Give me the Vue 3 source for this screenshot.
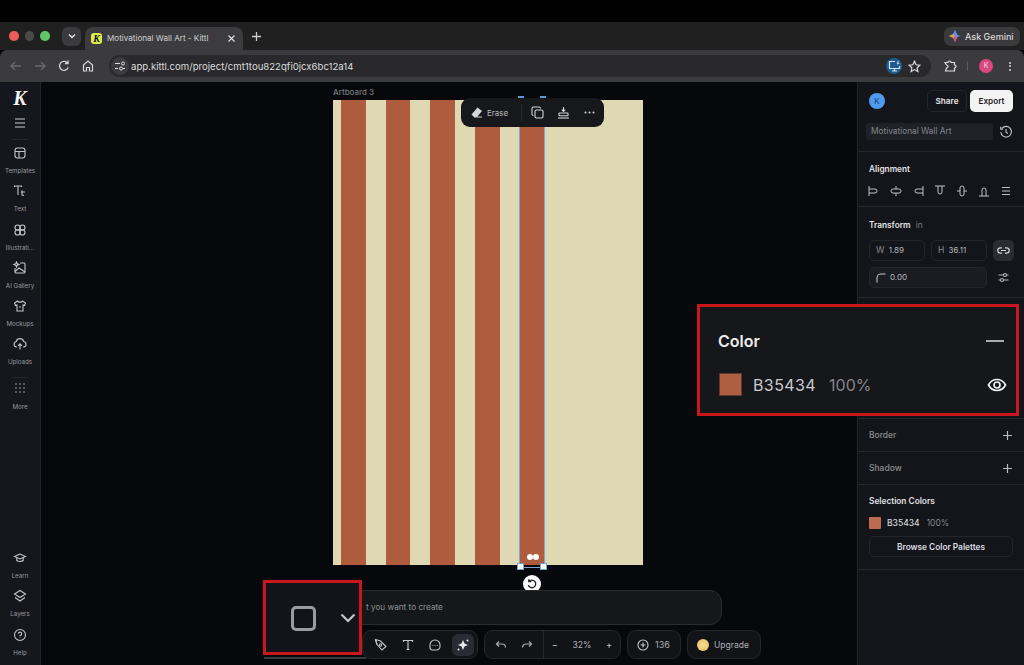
<script setup>
const navTop = [
  { label: 'Templates', icon: 'templates' },
  { label: 'Text', icon: 'text' },
  { label: 'Illustrati...', icon: 'illus' },
  { label: 'AI Gallery', icon: 'gallery' },
  { label: 'Mockups', icon: 'mockups' },
  { label: 'Uploads', icon: 'uploads' }
]
const navBottom = [
  { label: 'Learn', icon: 'learn' },
  { label: 'Layers', icon: 'layers' },
  { label: 'Help', icon: 'help' }
]
const stripes = [1, 2, 3, 4, 5]
const alignIcons = [
  'M2 2v10M2 5h6a2 2 0 0 1 0 4H2',
  'M7 2v3M7 9v3M4 5h6a2 2 0 0 1 0 4H4a2 2 0 0 1 0-4',
  'M12 2v10M12 5H6a2 2 0 0 0 0 4h6',
  'M2 2h10M5 2v6a2 2 0 0 0 4 0V2',
  'M2 7h3M9 7h3M5 4a2 2 0 0 1 4 0v6a2 2 0 0 1-4 0z',
  'M2 12h10M5 12V6a2 2 0 0 1 4 0v6'
]
</script>

<template>
  <div class="page">
    <div class="mac-top"></div>

    <div class="tabstrip">
      <div class="lights">
        <span class="light red"></span>
        <span class="light grey"></span>
        <span class="light green"></span>
      </div>
      <div class="tab-search">
        <svg width="10" height="10" viewBox="0 0 10 10"><path d="M2 3.500 5 6.500 8 3.500" fill="none" stroke="#ddd" stroke-width="1.500" /></svg>
      </div>
      <div class="tab">
        <span class="favicon">K</span>
        <span class="tab-title">Motivational Wall Art - Kittl</span>
        <svg width="9" height="9" viewBox="0 0 9 9"><path d="M1.500 1.500l6 6M7.500 1.500l-6 6" stroke="#ddd" stroke-width="1.200" /></svg>
      </div>
      <svg class="newtab" width="11" height="11" viewBox="0 0 11 11"><path d="M5.500 1v9M1 5.500h9" stroke="#ccc" stroke-width="1.300" /></svg>
      <div class="gemini">
        <svg width="12" height="12" viewBox="0 0 12 12"><path d="M6 0C6.400 3.500 8.500 5.600 12 6 8.500 6.400 6.400 8.500 6 12 5.600 8.500 3.500 6.400 0 6 3.500 5.600 5.600 3.500 6 0z" fill="#6f8fe8" /><path d="M6 0 8 4 6 6 4 4z" fill="#5b8def" /><path d="M0 6 4 4 6 6 4 8z" fill="#d8a24a" /><path d="M6 12 4 8 6 6 8 8z" fill="#d8588c" /></svg>
        <span>Ask Gemini</span>
      </div>
    </div>

    <div class="toolbar">
      <svg class="tb-icon" width="14" height="14" viewBox="0 0 14 14"><path d="M12 7H2M6 3 2 7l4 4" fill="none" stroke="#6a6a6a" stroke-width="1.300" /></svg>
      <svg class="tb-icon" width="14" height="14" viewBox="0 0 14 14"><path d="M2 7h10M8 3l4 4-4 4" fill="none" stroke="#6a6a6a" stroke-width="1.300" /></svg>
      <svg class="tb-icon" width="14" height="14" viewBox="0 0 14 14"><path d="M11.200 8.500A4.500 4.500 0 1 1 10.500 4M11 1.500V4.500H8" fill="none" stroke="#d5d5d5" stroke-width="1.300" /></svg>
      <svg class="tb-icon" width="14" height="14" viewBox="0 0 14 14"><path d="M2.500 6 7 2l4.500 4v6H8.500V8.500h-3V12h-3z" fill="none" stroke="#d5d5d5" stroke-width="1.200" /></svg>
      <div class="omnibox">
        <span class="site-info">
          <svg width="12" height="12" viewBox="0 0 12 12"><path d="M1 3.500h5M1 8.500h3" stroke="#ddd" stroke-width="1.200" /><circle cx="9" cy="3.500" r="1.500" fill="none" stroke="#ddd" /><circle cx="7" cy="8.500" r="1.500" fill="none" stroke="#ddd" /><path d="M9 8.500h2" stroke="#ddd" /></svg>
        </span>
        <span class="url">app.kittl.com/project/cmt1tou822qfi0jcx6bc12a14</span>
        <span class="install">
          <svg width="13" height="12" viewBox="0 0 13 12"><path d="M7 1.500H1.500v7h10V6M4 11h5M6.500 8.500V11" fill="none" stroke="#cfe4fa" stroke-width="1.200" /><path d="M10 1v3M8.700 3 10 4.300 11.300 3" fill="none" stroke="#cfe4fa" /></svg>
        </span>
        <svg class="star" width="13" height="13" viewBox="0 0 13 13"><path d="M6.500 1.200 8.100 4.800l3.900.4-2.900 2.600.8 3.800-3.400-2-3.400 2 .8-3.800L1 5.200l3.900-.4z" fill="none" stroke="#ddd" stroke-width="1.200" /></svg>
      </div>
      <svg class="ext" width="14" height="14" viewBox="0 0 14 14"><path d="M2 3.500h3a1.500 1.500 0 0 1 3 0h3.500V6a1.500 1.500 0 0 1 0 3v3H2.500L3.500 9a1.500 1.500 0 0 0 0-3z" fill="none" stroke="#ddd" stroke-width="1.200" /></svg>
      <span class="tb-sep"></span>
      <span class="profile">K</span>
      <span class="kebab"><i></i><i></i><i></i></span>
    </div>

    <div class="app">
      <aside class="sidebar">
        <span class="logo">K</span>
        <svg class="burger" width="12" height="10" viewBox="0 0 12 10"><path d="M1 1h10M1 5h10M1 9h10" stroke="#c9cacd" stroke-width="1.100" /></svg>
        <span class="side-rule"></span>
        <div v-for="item in navTop" :key="item.label" class="nav-item">
          <svg width="14" height="14" viewBox="0 0 14 14" fill="none" stroke="#c4c5c9" stroke-width="1.100">
            <template v-if="item.icon === 'templates'"><rect x="2" y="2" width="10" height="10" rx="2.500" /><path d="M2 5.500h10M6 5.500V12" /></template>
            <template v-if="item.icon === 'text'"><path d="M1.500 3V2h7v1M5 2v9" /><path d="M9 6.500v4.500l2 .5M8 8h4" /></template>
            <template v-if="item.icon === 'illus'"><circle cx="4.600" cy="4.600" r="2.600" /><circle cx="9.400" cy="4.600" r="2.600" /><circle cx="4.600" cy="9.400" r="2.600" /><circle cx="9.400" cy="9.400" r="2.600" /></template>
            <template v-if="item.icon === 'gallery'"><path d="M7 2h4a1 1 0 0 1 1 1v8a1 1 0 0 1-1 1H3a1 1 0 0 1-1-1V7" /><path d="M2 10.500 6 7l6 4" /><path d="M3.500 1l.7 1.800L6 3.500l-1.800.7L3.500 6l-.7-1.800L1 3.500l1.800-.7z" /></template>
            <template v-if="item.icon === 'mockups'"><path d="M4.500 2 1.500 4l1 2.500L4 6v6h6V6l1.500.5 1-2.500-3-2C9 3.500 5 3.500 4.500 2z" /><path d="M6 8h2" /></template>
            <template v-if="item.icon === 'uploads'"><path d="M4 10H3.500a2.800 2.800 0 0 1-.3-5.500 3.900 3.900 0 0 1 7.500 0 2.800 2.800 0 0 1 .1 5.500H10" /><path d="M7 12.500V7M5 8.800l2-2 2 2" /></template>
          </svg>
          <span>{{ item.label }}</span>
        </div>
        <span class="side-rule more-rule"></span>
        <div class="nav-item more">
          <svg width="14" height="14" viewBox="0 0 14 14" fill="#aeb0b5"><circle v-for="n in 9" :key="n" :cx="3 + ((n - 1) % 3) * 4" :cy="3 + Math.floor((n - 1) / 3) * 4" r=".8" /></svg>
          <span>More</span>
        </div>
        <div class="nav-bottom">
          <div v-for="item in navBottom" :key="item.label" class="nav-item">
            <svg width="14" height="14" viewBox="0 0 14 14" fill="none" stroke="#c4c5c9" stroke-width="1.100">
              <template v-if="item.icon === 'learn'"><path d="M7 3 1.500 5.500 7 8l5.500-2.500z" /><path d="M3.800 7v2.500c1.500 1.300 5 1.300 6.400 0V7" /></template>
              <template v-if="item.icon === 'layers'"><path d="M7 1.500 1.500 5 7 8.500 12.500 5z" /><path d="M2 8.500 7 12l5-3.500" /></template>
              <template v-if="item.icon === 'help'"><circle cx="7" cy="7" r="5.500" /><path d="M5.300 5.600A1.700 1.700 0 1 1 7 7.500v.8M7 9.700v.6" /></template>
            </svg>
            <span>{{ item.label }}</span>
          </div>
        </div>
      </aside>

      <main class="canvas">
        <div class="artboard-label">Artboard 3</div>
        <div class="artboard">
          <div v-for="s in stripes" :key="s" class="stripe"></div>
        </div>

        <div class="selection">
          <span class="top-handle left"></span>
          <span class="top-handle right"></span>
          <span class="handle left"></span>
          <span class="handle right"></span>
          <span class="pill-dots"><i></i><i></i></span>
        </div>
        <div class="rotate">
          <svg width="12" height="12" viewBox="0 0 12 12"><path d="M3 3.500A3.800 3.800 0 1 1 2.300 7M2.800 1.200V3.700H5.300" fill="none" stroke="#222" stroke-width="1.300" /></svg>
        </div>

        <div class="floating">
          <svg width="13" height="13" viewBox="0 0 13 13"><path d="M7.500 1.500 12 5l-5 6H4L1.500 8.500z" fill="#d6d6d8" /><path d="M4 11h8" stroke="#d6d6d8" /></svg>
          <span class="erase">Erase</span>
          <span class="float-sep"></span>
          <svg width="13" height="13" viewBox="0 0 13 13" fill="none" stroke="#d6d6d8" stroke-width="1.100"><rect x="4" y="4" width="8" height="8" rx="1.500" /><path d="M2.500 9.500A1.500 1.500 0 0 1 1 8V2.500A1.500 1.500 0 0 1 2.500 1H8a1.500 1.500 0 0 1 1.500 1.500" /></svg>
          <svg width="13" height="13" viewBox="0 0 13 13" fill="none" stroke="#d6d6d8" stroke-width="1.100"><path d="M6.500 1v4M4.800 3.700l1.700 1.700 1.700-1.700" /><rect x="2" y="7" width="9" height="2.800" rx=".5" /><path d="M1 12h11" /></svg>
          <svg width="13" height="13" viewBox="0 0 13 13" fill="#d6d6d8"><circle cx="2.500" cy="6.500" r="1" /><circle cx="6.500" cy="6.500" r="1" /><circle cx="10.500" cy="6.500" r="1" /></svg>
        </div>

        <div class="dock">
          <div class="prompt">t you want to create</div>
          <div class="tools">
            <div class="group first">
              <svg width="14" height="14" viewBox="0 0 14 14" fill="none" stroke="#c6c7cb" stroke-width="1.100"><path d="M1.500 1.500 3 6.500 8 12l4-3.500L6.500 3z" /><circle cx="6.500" cy="7" r="1.200" /><path d="M3 6.500 1.500 1.500" /></svg>
              <svg width="14" height="14" viewBox="0 0 14 14" fill="none" stroke="#c6c7cb" stroke-width="1.200"><path d="M2.500 4V2.500h9V4M7 2.500v9M5.500 11.500h3" /></svg>
              <svg width="14" height="14" viewBox="0 0 14 14" fill="none" stroke="#c6c7cb" stroke-width="1.100"><path d="M2 7a5 5 0 0 1 10 0v1.500A3.500 3.500 0 0 1 8.500 12H4.500A2.500 2.500 0 0 1 2 9.500z" /><path d="M4.500 7.500h.8M6.600 7.500h.8M8.700 7.500h.8" /></svg>
              <span class="ai-btn">
                <svg width="14" height="14" viewBox="0 0 14 14" fill="#e8e9ec"><path d="M7 2 8.500 5.500 12 7 8.500 8.500 7 12 5.500 8.500 2 7 5.500 5.500z" /><circle cx="11.500" cy="2.500" r="1" /><circle cx="2.500" cy="11.500" r="1" /></svg>
              </span>
            </div>
            <div class="group history">
              <span class="undo">
                <svg width="12" height="12" viewBox="0 0 12 12" fill="none" stroke="#a9aaae" stroke-width="1.200"><path d="M1.500 5H7a3.500 3.500 0 0 1 3.500 3.500M4 2.500 1.500 5 4 7.500" /></svg>
                <svg width="12" height="12" viewBox="0 0 12 12" fill="none" stroke="#a9aaae" stroke-width="1.200"><path d="M10.500 5H5a3.500 3.500 0 0 0-3.500 3.500M8 2.500 10.500 5 8 7.500" /></svg>
              </span>
              <span class="zoom">
                <b>−</b><em>32%</em><b>+</b>
              </span>
            </div>
            <div class="group credits">
              <svg width="14" height="14" viewBox="0 0 14 14" fill="none" stroke="#c6c7cb" stroke-width="1.100"><circle cx="7" cy="7" r="5" /><path d="M7 4.500v5M4.500 7h5" /></svg>
              <span>136</span>
            </div>
            <div class="group upgrade">
              <span class="coin"></span>
              <span>Upgrade</span>
            </div>
          </div>
        </div>
      </main>

      <aside class="panel">
        <section class="panel-head">
          <div class="head-row">
            <span class="avatar">K</span>
            <button class="share">Share</button>
            <button class="export">Export</button>
          </div>
          <div class="name-row">
            <span class="doc-name">Motivational Wall Art</span>
            <svg width="14" height="14" viewBox="0 0 14 14" fill="none" stroke="#c2c3c7" stroke-width="1.100"><path d="M3 3.300A5.300 5.300 0 1 1 1.800 7M1.700 1.800v2.400h2.400M7 4v3.300l2 1.200" /></svg>
          </div>
        </section>

        <section class="align-sec">
          <h3>Alignment</h3>
          <div class="align-row">
            <svg v-for="d in alignIcons" :key="d" width="14" height="14" viewBox="0 0 14 14"><path :d="d" fill="none" stroke="#bfc0c4" stroke-width="1" /></svg>
            <svg width="14" height="14" viewBox="0 0 14 14"><path d="M3 3.500h8M3 7h8M3 10.500h8" fill="none" stroke="#bfc0c4" stroke-width="1.100" /></svg>
          </div>
        </section>

        <section class="transform-sec">
          <h3>Transform <small>in</small></h3>
          <div class="field-grid">
            <div class="field"><i>W</i> 1.89</div>
            <div class="field"><i>H</i> 36.11</div>
            <span class="link-btn">
              <svg width="13" height="13" viewBox="0 0 13 13" fill="none" stroke="#d2d3d6" stroke-width="1.200"><path d="M5 3.800H3.500a2.700 2.700 0 0 0 0 5.400H5M8 3.800h1.500a2.700 2.700 0 0 1 0 5.400H8M4 6.500h5" /></svg>
            </span>
            <div class="field wide">
              <svg width="10" height="10" viewBox="0 0 10 10" fill="none" stroke="#c2c3c7" stroke-width="1.100"><path d="M1 9.500V5a4 4 0 0 1 4-4h4.500" /></svg>
              0.00
            </div>
            <span class="tune">
              <svg width="13" height="13" viewBox="0 0 13 13" fill="none" stroke="#b4b5b9" stroke-width="1.100"><path d="M1.500 4h10M1.500 9h10" /><circle cx="8" cy="4" r="1.500" fill="#14151a" /><circle cx="5" cy="9" r="1.500" fill="#14151a" /></svg>
            </span>
          </div>
        </section>

        <section class="color-slot"></section>

        <section class="row-sec">
          <span>Border</span>
          <svg width="11" height="11" viewBox="0 0 11 11"><path d="M5.500 1v9M1 5.500h9" stroke="#bcbdc1" stroke-width="1.200" /></svg>
        </section>
        <section class="row-sec">
          <span>Shadow</span>
          <svg width="11" height="11" viewBox="0 0 11 11"><path d="M5.500 1v9M1 5.500h9" stroke="#bcbdc1" stroke-width="1.200" /></svg>
        </section>

        <section class="selection-sec">
          <h3>Selection Colors</h3>
          <div class="sel-color">
            <span class="sel-swatch"></span>
            <span class="sel-hex">B35434</span>
            <span class="sel-pct">100%</span>
          </div>
          <button class="browse">Browse Color Palettes</button>
        </section>
      </aside>

      <div class="callout color-callout">
        <div class="callout-head">
          <span>Color</span>
          <span class="minus"></span>
        </div>
        <div class="callout-row">
          <span class="swatch"></span>
          <span class="hex">B35434</span>
          <span class="pct">100%</span>
          <svg class="eye" width="20" height="20" viewBox="0 0 20 20" fill="none" stroke="#f0f0f1" stroke-width="1.700"><path d="M1.500 10C3.500 6.200 6.500 4.500 10 4.500s6.500 1.700 8.500 5.500c-2 3.800-5 5.500-8.500 5.500S3.500 13.800 1.500 10z" /><circle cx="10" cy="10" r="3" /></svg>
        </div>
      </div>

      <div class="callout shape-callout">
        <span class="rounded-square"></span>
        <svg width="16" height="10" viewBox="0 0 16 10" fill="none" stroke="#c5c6ca" stroke-width="2.200"><path d="M1.500 1.500 8 8l6.500-6.500" /></svg>
      </div>
      <span class="shape-underline"></span>
    </div>
  </div>
</template>

<style>
html, body {
  margin: 0;
  background: #000;
}
</style>

<style scoped>
.page {
  width: 1024px;
  height: 665px;
  display: flex;
  flex-direction: column;
  overflow: hidden;
  background: #000;
  font-family: Inter, "Liberation Sans", sans-serif;
  color: #d8d9dc;
}

.mac-top {
  height: 22px;
  flex: none;
  background: #000;
}

.tabstrip {
  height: 28px;
  flex: none;
  display: flex;
  align-items: center;
  background: #202021;
  padding-left: 9px;
  padding-right: 4px;
  box-sizing: border-box;
}

.lights {
  display: flex;
  gap: 6px;
  width: 53px;
  flex: none;
}

.light {
  width: 9.500px;
  height: 9.500px;
  border-radius: 50%;
}

.light.red { background: #ec5a5c; }
.light.grey { background: #4a4a4b; }
.light.green { background: #5fc766; }

.tab-search {
  width: 19px;
  height: 19px;
  background: #3b3b3d;
  border-radius: 6px;
  display: flex;
  align-items: center;
  justify-content: center;
  flex: none;
}

.tab {
  width: 158px;
  height: 23px;
  margin-top: 5px;
  margin-left: 4px;
  padding: 0 7px 1px 6px;
  box-sizing: border-box;
  background: #3c3c3e;
  border-radius: 8px 8px 0 0;
  display: flex;
  align-items: center;
  flex: none;
}

.favicon {
  width: 11px;
  height: 11px;
  background: #dcee4e;
  color: #111;
  border-radius: 3px;
  font: italic 700 10px/11px "Liberation Serif", serif;
  text-align: center;
  flex: none;
}

.tab-title {
  font-size: 8.100px;
  color: #cfcfd0;
  margin-left: 5px;
  flex: 1;
  white-space: nowrap;
}

.newtab {
  margin-left: 8px;
}

.gemini {
  margin-left: auto;
  width: 76px;
  height: 19px;
  background: #3a3a3c;
  border-radius: 7px;
  display: flex;
  align-items: center;
  gap: 4px;
  padding-left: 5px;
  box-sizing: border-box;
  font-size: 9px;
  font-weight: 500;
  color: #d8d8d9;
  white-space: nowrap;
}

.toolbar {
  height: 32px;
  flex: none;
  background: #3b3b3d;
  border-radius: 7px 7px 0 0;
  display: flex;
  align-items: center;
  padding-left: 9px;
  box-sizing: border-box;
}

.tb-icon {
  margin-right: 10px;
}

.omnibox {
  width: 822px;
  height: 22px;
  margin-left: 4px;
  background: #29292b;
  border-radius: 11px;
  display: flex;
  align-items: center;
  flex: none;
}

.site-info {
  width: 18px;
  height: 18px;
  margin-left: 2px;
  background: #3c3c3e;
  border-radius: 50%;
  display: flex;
  align-items: center;
  justify-content: center;
}

.url {
  font-size: 9.600px;
  color: #dcdcdd;
  margin-left: 2px;
}

.install {
  margin-left: auto;
  width: 16px;
  height: 16px;
  background: #1f5b8c;
  border-radius: 50%;
  display: flex;
  align-items: center;
  justify-content: center;
}

.star {
  margin-left: 6px;
  margin-right: 10px;
}

.ext {
  margin-left: 12px;
}

.tb-sep {
  width: 1px;
  height: 10px;
  background: #5a5a5c;
  margin-left: 10px;
}

.profile {
  width: 14px;
  height: 14px;
  margin-left: 11px;
  background: #d9487f;
  color: #f6d5e2;
  border-radius: 50%;
  font-size: 7px;
  line-height: 14px;
  text-align: center;
}

.kebab {
  display: flex;
  flex-direction: column;
  gap: 1.500px;
  margin-left: 16px;
}

.kebab i {
  width: 2px;
  height: 2px;
  background: #d5d5d5;
  border-radius: 50%;
}

.app {
  flex: 1;
  display: flex;
  position: relative;
  min-height: 0;
}

.sidebar {
  width: 41px;
  flex: none;
  background: #16171c;
  border-right: 1px solid #222328;
  box-sizing: border-box;
  display: flex;
  flex-direction: column;
  align-items: center;
}

.logo {
  font: italic 700 20px/20px "Liberation Serif", serif;
  color: #f3f3f4;
  margin-top: 6px;
}

.burger {
  margin-top: 10px;
}

.side-rule {
  width: 16px;
  height: 1px;
  background: #26272c;
  margin-top: 11px;
  margin-bottom: 6px;
  flex: none;
}

.more-rule {
  margin-top: 1px;
  margin-bottom: 3px;
}

.nav-item {
  width: 100%;
  height: 38.300px;
  flex: none;
  display: flex;
  flex-direction: column;
  align-items: center;
  gap: 7px;
  font-size: 6.200px;
  color: #9a9ba0;
  white-space: nowrap;
}

.nav-item.more {
  height: 34px;
  gap: 8px;
}

.nav-bottom {
  margin-top: auto;
  width: 100%;
  margin-bottom: -1px;
}

.canvas {
  flex: 1;
  position: relative;
  min-width: 0;
  background: #07080c;
}

.artboard-label {
  position: absolute;
  left: 292px;
  top: 5px;
  font-size: 8px;
  font-weight: 500;
  color: #77787c;
}

.artboard {
  position: absolute;
  left: 292px;
  top: 18px;
  width: 310px;
  height: 465px;
  background: #dfd9b3;
  display: flex;
  gap: 20.200px;
  padding-left: 8px;
  box-sizing: border-box;
}

.stripe {
  width: 24.500px;
  background: #ae5c3d;
}

.selection {
  position: absolute;
  left: 478px;
  top: 18px;
  width: 26px;
  height: 468px;
  border: 1px solid #7ba7d8;
  border-top: none;
  box-sizing: border-box;
}

.top-handle {
  position: absolute;
  top: -4px;
  width: 6px;
  height: 4px;
  background: #5f97d2;
}

.top-handle.left { left: -2px; }
.top-handle.right { right: -2px; }

.handle {
  position: absolute;
  bottom: -3px;
  width: 5px;
  height: 5px;
  background: #fff;
  border: 1px solid #6fa2da;
}

.handle.left { left: -3px; }
.handle.right { right: -3px; }

.pill-dots {
  position: absolute;
  left: 7px;
  bottom: 7px;
  display: flex;
}

.pill-dots i {
  width: 6px;
  height: 6px;
  background: #fff;
  border-radius: 50%;
}

.rotate {
  position: absolute;
  left: 482px;
  top: 493px;
  width: 18px;
  height: 18px;
  background: #fff;
  border-radius: 50%;
  display: flex;
  align-items: center;
  justify-content: center;
}

.floating {
  position: absolute;
  left: 420px;
  top: 16px;
  width: 143px;
  height: 29px;
  background: #17181c;
  border-radius: 9px;
  display: flex;
  align-items: center;
  padding-left: 9px;
  box-sizing: border-box;
}

.erase {
  font-size: 8px;
  color: #b9babd;
  margin-left: 4px;
}

.float-sep {
  width: 1px;
  height: 17px;
  background: #27282c;
  margin: 0 9px 0 13px;
}

.floating svg:nth-of-type(3) {
  margin-left: 13px;
}

.floating svg:nth-of-type(4) {
  margin-left: 13px;
}

.dock {
  position: absolute;
  left: 300px;
  top: 508px;
  display: flex;
  flex-direction: column;
  gap: 5px;
}

.prompt {
  width: 381px;
  height: 35px;
  background: #16171b;
  border: 1px solid #2b2c30;
  border-radius: 12px;
  box-sizing: border-box;
  padding-left: 24px;
  font-size: 8.200px;
  line-height: 33px;
  color: #8e8f93;
}

.tools {
  display: flex;
  gap: 6px;
  margin-left: 21px;
}

.group {
  height: 29px;
  background: #121317;
  border: 1px solid #25262a;
  border-radius: 9px;
  box-sizing: border-box;
  display: flex;
  align-items: center;
  font-size: 8.500px;
  color: #aeafb3;
}

.group.first {
  width: 116px;
  justify-content: flex-end;
  gap: 13px;
  padding-right: 3px;
}

.ai-btn {
  width: 22px;
  height: 22px;
  margin-left: -3px;
  background: #2a2c33;
  border-radius: 6px;
  display: flex;
  align-items: center;
  justify-content: center;
}

.group.history {
  width: 137px;
}

.undo {
  width: 59px;
  height: 100%;
  flex: none;
  display: flex;
  align-items: center;
  justify-content: space-between;
  padding: 0 10px;
  box-sizing: border-box;
  border-right: 1px solid #25262a;
}

.zoom {
  flex: 1;
  display: flex;
  justify-content: space-between;
  padding: 0 8px;
  align-items: center;
}

.zoom b {
  font-weight: 500;
  color: #c2c3c7;
}

.zoom em {
  font-style: normal;
}

.group.credits {
  width: 54px;
  gap: 5px;
  padding-left: 8px;
  font-size: 9px;
}

.group.upgrade {
  width: 74px;
  gap: 5px;
  padding-left: 9px;
  font-size: 8.500px;
  white-space: nowrap;
}

.coin {
  width: 12px;
  height: 12px;
  background: radial-gradient(circle, #f3dc97 0%, #e6bd56 100%);
  border-radius: 50%;
}

.panel {
  width: 167px;
  flex: none;
  background: #14151a;
  border-left: 1px solid #24252a;
  box-sizing: border-box;
  font-size: 8.500px;
}

.panel section {
  box-sizing: border-box;
  border-bottom: 1px solid #26272b;
  padding-left: 11px;
}

h3 {
  margin: 0;
  font-size: 8.300px;
  font-weight: 600;
  color: #e0e1e3;
}

h3 small {
  font-size: 8.500px;
  font-weight: 400;
  color: #77787c;
  margin-left: 3px;
}

.panel-head {
  height: 70px;
  padding-top: 8px;
}

.head-row {
  display: flex;
  align-items: center;
  padding-right: 11px;
  gap: 3px;
}

.avatar {
  width: 16px;
  height: 16px;
  background: #4f9bf1;
  color: #1d3f6b;
  border-radius: 50%;
  font-size: 8px;
  line-height: 16px;
  text-align: center;
}

.head-row button {
  height: 22px;
  font: 600 8.200px Inter, sans-serif;
  border-radius: 5px;
  padding: 0;
}

.share {
  width: 40px;
  margin-left: auto;
  background: transparent;
  border: 1px solid #25262a;
  color: #e6e6e8;
}

.export {
  width: 43px;
  background: #f4f4f5;
  border: none;
  color: #1a1b1e;
}

.name-row {
  display: flex;
  align-items: center;
  margin-top: 11px;
  margin-left: -3px;
}

.doc-name {
  width: 127px;
  height: 17px;
  background: #1e2127;
  border-radius: 3px;
  padding-left: 5px;
  box-sizing: border-box;
  font-size: 8.300px;
  line-height: 16px;
  color: #86878c;
}

.name-row svg {
  margin-left: 6px;
}

.align-sec {
  height: 55px;
  padding-top: 12px;
}

.align-row {
  display: flex;
  gap: 8px;
  margin-top: 10px;
  margin-left: -2px;
}

.transform-sec {
  height: 91px;
  padding-top: 13px;
}

.field-grid {
  display: grid;
  grid-template-columns: 56px 56px 21px;
  grid-auto-rows: 21px;
  gap: 6px;
  margin-top: 10px;
}

.field {
  border: 1px solid #25262a;
  border-radius: 5px;
  font-size: 8px;
  line-height: 19px;
  padding-left: 6px;
  color: #b5b6ba;
  white-space: nowrap;
}

.field i {
  font-style: normal;
  color: #8e8f93;
  margin-right: 2px;
  font-size: 8.500px;
}

.field.wide {
  grid-column: span 2;
  background: #1b1c21;
  display: flex;
  align-items: center;
  gap: 4px;
}

.link-btn {
  background: #2a2c33;
  border-radius: 5px;
  display: flex;
  align-items: center;
  justify-content: center;
}

.tune {
  display: flex;
  align-items: center;
  justify-content: center;
}

.color-slot {
  height: 121px;
}

.row-sec {
  height: 33px;
  display: flex;
  align-items: center;
  justify-content: space-between;
  padding-right: 11px;
  color: #8c8d91;
  font-weight: 500;
}

.selection-sec {
  height: 85px;
  padding-top: 11px;
}

.sel-color {
  display: flex;
  align-items: center;
  margin-top: 11px;
}

.sel-swatch {
  width: 12px;
  height: 12px;
  background: #bb6c4e;
  border-radius: 1px;
}

.sel-hex {
  margin-left: 6px;
  color: #d5d6d9;
  font-weight: 500;
}

.sel-pct {
  margin-left: 7px;
  color: #85868a;
}

.browse {
  display: block;
  width: 144px;
  height: 21px;
  margin-top: 7px;
  background: transparent;
  border: 1px solid #25262a;
  border-radius: 5px;
  padding: 0;
  font: 600 8.300px Inter, sans-serif;
  color: #dcdde0;
}

.callout {
  position: absolute;
  background: #16171b;
  border: 3px solid #c9171e;
  box-sizing: border-box;
}

.color-callout {
  left: 697px;
  top: 222px;
  width: 322px;
  height: 112px;
  padding: 0 12px 0 18px;
}

.callout-head {
  display: flex;
  justify-content: space-between;
  align-items: center;
  margin-top: 24px;
  font-size: 16px;
  font-weight: 600;
  line-height: 20px;
  color: #ececed;
}

.minus {
  width: 18px;
  height: 2px;
  background: #a9aaad;
}

.callout-row {
  display: flex;
  align-items: center;
  margin-top: 22px;
  font-size: 16px;
}

.swatch {
  width: 23px;
  height: 23px;
  margin-left: 1px;
  background: #ae5f41;
  border: 1px solid #5d3a2c;
  box-sizing: border-box;
}

.hex {
  margin-left: 11px;
  color: #c9cacd;
  letter-spacing: .4px;
}

.pct {
  margin-left: 13px;
  color: #85868a;
}

.eye {
  margin-left: auto;
  margin-right: -3px;
}

.shape-callout {
  left: 263px;
  top: 498px;
  width: 99px;
  height: 75px;
  display: flex;
  align-items: center;
  gap: 24px;
  padding-left: 25px;
  background: #13141a;
}

.rounded-square {
  width: 25px;
  height: 25px;
  margin-top: 2px;
  border: 3px solid #9b9ca0;
  border-radius: 5px;
  box-sizing: border-box;
  flex: none;
}

.shape-underline {
  position: absolute;
  left: 264px;
  top: 575px;
  width: 102px;
  height: 2px;
  background: #3a3b40;
}
</style>
